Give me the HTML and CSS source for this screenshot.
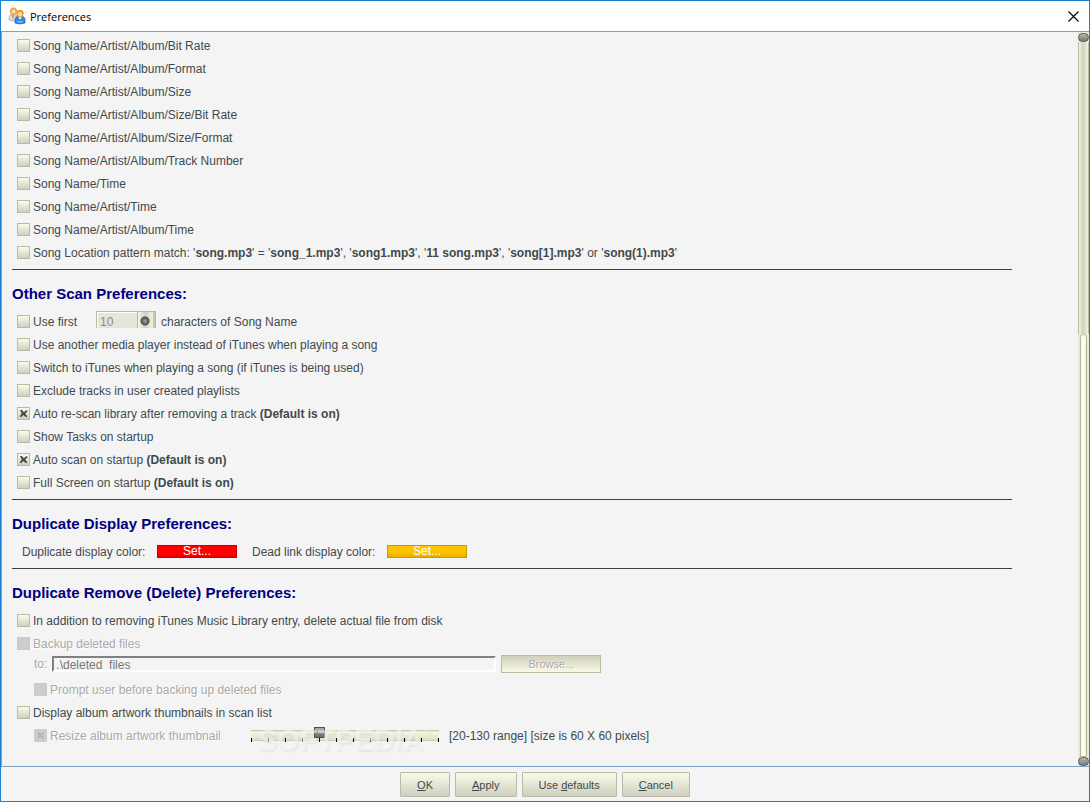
FILE: index.html
```
<!DOCTYPE html>
<html lang="en">
<head>
    <meta charset="UTF-8">
    <meta name="viewport" content="width=device-width, initial-scale=1.0">
    <title>Preferences</title>
    <link rel="stylesheet" href="styles.css">
</head>
<body>
    <header class="titlebar">
        <svg class="app-icon" width="18" height="18" viewBox="0 0 18 18">
            <path d="M1 13V10q0-3 4-3t4 3v3q-4 2-8 0z" fill="#d9dde2" stroke="#a9adb3" stroke-width=".7"/>
            <path d="M3.500 7.500l1.500 5 1.500-5z" fill="#f08a24"/>
            <circle cx="5.500" cy="4" r="3.600" fill="#f9a23a"/>
            <circle cx="5.500" cy="4.600" r="2" fill="#ffdca0"/>
            <path d="M7 16v-3q0-4 5-4t5 4v3q-5 2-10 0z" fill="#2f86ea" stroke="#1761c4" stroke-width=".7"/>
            <path d="M9 15q3 1 6 0v-1q-3 1-6 0z" fill="#a5d2ff"/>
            <path d="M10.500 10l1.500 3 1.500-3z" fill="#fff"/>
            <circle cx="12" cy="6.500" r="3.700" fill="#f59b2e"/>
            <circle cx="12" cy="7.200" r="2.100" fill="#ffdf9f"/>
        </svg>
        <h1>Preferences</h1>
        <button class="close" type="button" aria-label="Close">
            <svg width="11" height="11" viewBox="0 0 11 11"><path d="M.5.5l10 10M10.500.5l-10 10" stroke="#000" stroke-width="1.100"/></svg>
        </button>
    </header>
    <main class="pane">
        <form class="prefs">
            <section>
                <label class="row"><input type="checkbox">Song Name/Artist/Album/Bit Rate</label>
                <label class="row"><input type="checkbox">Song Name/Artist/Album/Format</label>
                <label class="row"><input type="checkbox">Song Name/Artist/Album/Size</label>
                <label class="row"><input type="checkbox">Song Name/Artist/Album/Size/Bit Rate</label>
                <label class="row"><input type="checkbox">Song Name/Artist/Album/Size/Format</label>
                <label class="row"><input type="checkbox">Song Name/Artist/Album/Track Number</label>
                <label class="row"><input type="checkbox">Song Name/Time</label>
                <label class="row"><input type="checkbox">Song Name/Artist/Time</label>
                <label class="row"><input type="checkbox">Song Name/Artist/Album/Time</label>
                <label class="row"><input type="checkbox"><span>Song Location pattern match: '<b>song.mp3</b>' = '<b>song_1.mp3</b>', '<b>song1.mp3</b>', '<b>11 song.mp3</b>', '<b>song[1].mp3</b>' or '<b>song(1).mp3</b>'</span></label>
            </section>
            <section>
                <h2>Other Scan Preferences:</h2>
                <div class="row">
                    <input type="checkbox" id="useFirst"><label for="useFirst">Use first</label>
                    <span class="spinner">
                        <input type="text" id="charCount" value="10" disabled>
                        <button type="button" aria-label="Change count" disabled></button>
                    </span>
                    <label for="charCount">characters of Song Name</label>
                </div>
                <label class="row"><input type="checkbox">Use another media player instead of iTunes when playing a song</label>
                <label class="row"><input type="checkbox">Switch to iTunes when playing a song (if iTunes is being used)</label>
                <label class="row"><input type="checkbox">Exclude tracks in user created playlists</label>
                <label class="row"><input type="checkbox" checked><span>Auto re-scan library after removing a track <b>(Default is on)</b></span></label>
                <label class="row"><input type="checkbox">Show Tasks on startup</label>
                <label class="row"><input type="checkbox" checked><span>Auto scan on startup <b>(Default is on)</b></span></label>
                <label class="row"><input type="checkbox"><span>Full Screen on startup <b>(Default is on)</b></span></label>
            </section>
            <section>
                <h2>Duplicate Display Preferences:</h2>
                <div class="row colors">
                    <label for="dupColor">Duplicate display color:</label>
                    <button class="color red" id="dupColor" type="button">Set...</button>
                    <label for="deadColor">Dead link display color:</label>
                    <button class="color gold" id="deadColor" type="button">Set...</button>
                </div>
            </section>
            <section>
                <h2>Duplicate Remove (Delete) Preferences:</h2>
                <label class="row"><input type="checkbox">In addition to removing iTunes Music Library entry, delete actual file from disk</label>
                <label class="row off"><input type="checkbox" disabled>Backup deleted files</label>
                <div class="row indent backup off">
                    <label for="backupDir">to:</label>
                    <input type="text" id="backupDir" value=".\deleted_files" disabled>
                    <button class="browse" type="button" disabled>Browse...</button>
                </div>
                <label class="row indent off"><input type="checkbox" disabled>Prompt user before backing up deleted files</label>
                <label class="row"><input type="checkbox">Display album artwork thumbnails in scan list</label>
                <div class="row indent">
                    <label class="resize off"><input type="checkbox" checked disabled>Resize album artwork thumbnail</label>
                    <span class="slider">
                        <input type="range" id="thumbSize" min="20" max="130" value="60" disabled>
                        <span class="watermark">SOFTPEDIA<sup>®</sup></span>
                    </span>
                    <label for="thumbSize">[20-130 range] [size is 60 X 60 pixels]</label>
                </div>
            </section>
        </form>
        <div class="scrollbar">
            <i class="knob"></i>
            <span class="track"></span>
            <span class="thumb"></span>
            <i class="knob"></i>
        </div>
    </main>
    <footer class="actions">
        <button type="button"><u>O</u>K</button>
        <button type="button"><u>A</u>pply</button>
        <button type="button">Use <u>d</u>efaults</button>
        <button type="button"><u>C</u>ancel</button>
    </footer>
</body>
</html>
```
FILE: styles.css
```
* {
    box-sizing: border-box;
}
body {
    margin: 0;
    height: 100vh;
    display: flex;
    flex-direction: column;
    border: 1px solid #1a80d0;
    background: #f4f4f4;
    color: #414a4c;
    font: 12px "Liberation Sans", Arial, sans-serif;
}
button, input {
    font: inherit;
    color: inherit;
    margin: 0;
}
.titlebar {
    display: flex;
    align-items: center;
    gap: 4px;
    height: 30px;
    padding: 0 10px 0 7px;
    background: #fff;
}
.titlebar h1 {
    flex: 1;
    margin: 0;
    color: #000;
    font: 11px "Open Sans", "Noto Sans", sans-serif;
}
.close {
    display: flex;
    padding: 0;
    border: 0;
    background: none;
}
.pane {
    flex: 1;
    min-height: 0;
    display: flex;
    overflow: hidden;
    border: 1px solid #7fa3c2;
    border-width: 1px 0 1px 1px;
}
.prefs {
    flex: 1;
    padding: 2px 66px 0 10px;
}
section + section {
    margin-top: 5px;
    border-top: 1px solid #404040;
}
h2 {
    margin: 0;
    padding: 12px 0 4px;
    color: #000080;
    font-size: 15px;
    line-height: 24px;
}
.row {
    display: flex;
    align-items: center;
    height: 23px;
    padding-left: 5px;
    white-space: nowrap;
}
.indent {
    padding-left: 22px;
}
.off {
    color: #a9a9a9;
    text-shadow: 1px 1px #fff;
}
input[type="checkbox"] {
    appearance: none;
    width: 13px;
    height: 13px;
    margin-right: 3px;
    border: 1px solid #babba4;
    background: linear-gradient(#fbfbe9, #cfcfc0);
}
input[type="checkbox"]:checked::before {
    content: "";
    display: block;
    height: 11px;
    background: #414a4c;
    clip-path: polygon(18% 18%, 36% 18%, 52% 38%, 80% 18%, 88% 27%, 65% 52%, 86% 75%, 74% 84%, 48% 64%, 28% 84%, 16% 75%, 34% 50%);
}
input[type="checkbox"]:disabled {
    border-color: #cbcbcb;
    background: #cdcdcd;
}
input[type="checkbox"]:disabled::before {
    background: #b5b5b5;
}
.spinner {
    display: flex;
    align-self: flex-start;
    height: 17px;
    margin: 1px 5px 0 19px;
    border: 1px solid #b9baa4;
    border-bottom: 0;
}
.spinner input {
    width: 40px;
    padding: 2px 0 0 2px;
    border: 1px solid #fff;
    border-width: 1px 0 0 1px;
    background: #e7e5da;
    color: #8a8a85;
}
.spinner button {
    width: 18px;
    padding: 0;
    border: 0;
    border-left: 1px solid #b9baa4;
    border-right: 2px solid #c6c7b2;
    background: radial-gradient(circle at 7px 9px, #a0a29d 0, #4b4e49 4px, transparent 5px),
        linear-gradient(90deg, #f6f6df, #d2d2c1, #f3f3dc);
}
.colors {
    padding-left: 10px;
}
.colors label {
    width: 127px;
}
.colors label + button {
    margin: 0 15px 0 8px;
}
.color {
    width: 80px;
    height: 13px;
    padding: 0;
    border: 1px solid;
    color: #fff;
    line-height: 11px;
}
.red {
    border-color: #c80000;
    background: linear-gradient(#f00 70%, #e80000);
}
.gold {
    border-color: #c79a00;
    background: linear-gradient(#ffc400 50%, #e8b000);
}
.backup {
    align-items: flex-start;
}
.backup label {
    line-height: 18px;
}
.backup input {
    width: 444px;
    height: 16px;
    margin: 1px 5px 0;
    padding: 1px 0 0 2px;
    border: 2px solid #fff;
    border-top-color: #808080;
    border-left-color: #808080;
    background: #f4f4f4;
    color: #777;
}
.browse {
    width: 100px;
    height: 18px;
    padding: 0;
    border: 1px solid #babba4;
    background: linear-gradient(#cfcfbd, #f9f9e4);
    color: #aaa;
    font-size: 11px;
    text-shadow: 1px 1px #fff;
}
.resize {
    display: flex;
    align-items: center;
    width: 217px;
}
.slider {
    position: relative;
    width: 188px;
    height: 18px;
    margin-right: 10px;
    background: repeating-linear-gradient(90deg, #000 0 1px, transparent 1px 17px) 0 11px / 100% 4px no-repeat,
        linear-gradient(#b9baa4, #f6f6df 2px, #dedecb 10px, #b9baa4 11px) 0 3px / 100% 11px no-repeat;
}
.slider input {
    appearance: none;
    display: block;
    width: 198px;
    height: 11px;
    margin: 0 -5px;
    background: none;
}
.slider input::-webkit-slider-thumb {
    appearance: none;
    width: 11px;
    height: 11px;
    border: 1px solid #4e504c;
    background: linear-gradient(#a9aba7, #6c6e6a);
}
.watermark {
    position: absolute;
    top: -4px;
    left: 7px;
    color: rgba(248, 248, 248, 0.6);
    font-size: 29px;
    font-weight: bold;
    line-height: 34px;
    text-shadow: 1px 2px 2px rgba(0, 0, 0, 0.06);
}
.watermark sup {
    font-size: 8px;
    line-height: 8px;
    vertical-align: 16px;
}
.scrollbar {
    display: flex;
    flex-direction: column;
    width: 11px;
    padding: 1px 0 0;
    background: #e9e9d8;
}
.knob {
    height: 9px;
    border: 1px solid #555852;
    border-radius: 5px;
    background: linear-gradient(#b4b6b1, #777974);
}
.track {
    flex: 41;
    border: 1px solid #babba4;
    border-width: 0 1px;
    background: linear-gradient(90deg, #f3f3df, #d0d0c0 4px, #f3f3df);
}
.thumb {
    flex: 59;
    margin: 0 2px;
    border: 1px solid #b4b59f;
    border-radius: 5px 5px 0 0;
    background: linear-gradient(90deg, #fcfce9, #fdfdea 4px, #e9e9d6);
}
.actions {
    display: flex;
    justify-content: center;
    gap: 5px;
    height: 34px;
    padding: 5px 0 4px;
}
.actions button {
    padding: 0 16px;
    border: 1px solid #babba4;
    border-radius: 1px;
    background: linear-gradient(#fbfbe9, #cfcfc0);
    font-size: 11px;
}
```
